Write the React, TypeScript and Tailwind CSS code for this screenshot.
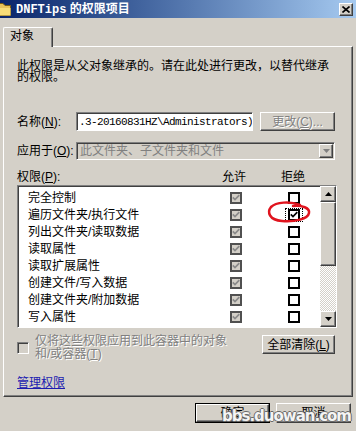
import React from 'react'

const raised =
  'border border-t-white border-l-white border-r-[#404040] border-b-[#404040] shadow-[inset_-1px_-1px_#808080]'
const sunken =
  'border border-t-[#808080] border-l-[#808080] border-r-white border-b-white shadow-[inset_1px_1px_#404040]'
const grayText = 'text-[#808080] [text-shadow:1px_1px_#ffffff]'

const rows = [
  '完全控制',
  '遍历文件夹/执行文件',
  '列出文件夹/读取数据',
  '读取属性',
  '读取扩展属性',
  '创建文件/写入数据',
  '创建文件夹/附加数据',
  '写入属性',
  '写入扩展属性',
]

function Box({ checked = false, disabled = false }: { checked?: boolean; disabled?: boolean }) {
  return (
    <span
      className={`w-[12px] h-[12px] shrink-0 flex items-center justify-center border-2 ${
        disabled ? 'border-[#505050] bg-[#d4d0c8]' : 'border-black bg-white'
      }`}
    >
      {checked && (
        <svg width="8" height="7" viewBox="0 0 8 7">
          <path d="M0.8 3.4 L3 5.6 L7.3 1.2" stroke={disabled ? '#8a8a8a' : '#000000'} strokeWidth="1.7" fill="none" />
        </svg>
      )}
    </span>
  )
}

function Arrow({ up = false, color = '#000000' }: { up?: boolean; color?: string }) {
  return (
    <svg width="7" height="4" viewBox="0 0 7 4">
      <path d={up ? 'M0 4 L3.5 0 L7 4 Z' : 'M0 0 L7 0 L3.5 4 Z'} fill={color} />
    </svg>
  )
}

function Scrollbar() {
  return (
    <div className="w-[16px] h-full flex flex-col bg-[#d4d0c8]">
      <div className={`h-[16px] ${raised} flex items-center justify-center`}>
        <Arrow up />
      </div>
      <div className={`h-[64px] ${raised}`} />
      <div className="flex-1 bg-[repeating-conic-gradient(#d4d0c8_0_25%,#ffffff_0_50%)] [background-size:2px_2px]" />
      <div className={`h-[16px] ${raised} flex items-center justify-center`}>
        <Arrow />
      </div>
    </div>
  )
}

export default function App() {
  return (
    <div className="relative w-[356px] h-[431px] overflow-hidden bg-[#d4d0c8] text-[12px] leading-[14px] text-black font-['Liberation_Sans','Noto_Sans_CJK_SC',sans-serif] flex flex-col">
      {/* title bar */}
      <div className="h-[18px] shrink-0 flex items-center bg-linear-to-r from-[#0a246a] to-[#a6caf0] pr-[3px]">
        <svg width="11" height="14" viewBox="0 0 11 14" className="shrink-0">
          <path d="M-4 1.5 H3 L5 3.5 H10.5 V13.5 H-4 Z" fill="#e8c25a" stroke="#7a5c12" strokeWidth="1" />
          <path d="M-4 6 H10.5 V13.5 H-4 Z" fill="#f7dc78" />
        </svg>
        <span className="ml-[5px] text-white font-bold whitespace-nowrap">
          <span className="font-['Liberation_Mono',monospace]">DNFTips</span> 的权限项目
        </span>
        <div className={`ml-auto w-[14px] h-[13px] bg-[#d4d0c8] ${raised} flex items-center justify-center`}>
          <svg width="8" height="7" viewBox="0 0 8 7">
            <path d="M0.5 0.5 L7.5 6.5 M7.5 0.5 L0.5 6.5" stroke="#000000" strokeWidth="1.6" />
          </svg>
        </div>
      </div>

      {/* tab + panel */}
      <div className="pt-[9px] pl-[3px]">
        <div className="relative z-10 -mb-px w-[50px] h-[20px] bg-[#d4d0c8] border-t border-l border-r border-b-0 border-t-white border-l-white border-r-[#404040] shadow-[inset_-1px_0_#808080] rounded-t-[2px] pl-[6px] pt-[1px]">
          对象
        </div>
        <div className={`w-[350px] h-[351px] ${raised} flex flex-col pl-[13px]`}>
          <p className="pt-[14px] w-[318px] leading-[11px]">
            此权限是从父对象继承的。请在此处进行更改，以替代继承的权限。
          </p>

          <div className="mt-[29px] flex items-center h-[19px]">
            <span className="w-[59px] whitespace-nowrap">
              名称(<u>N</u>):
            </span>
            <div
              className={`w-[177px] h-[19px] bg-white ${sunken} flex items-center pl-[2px] overflow-hidden whitespace-nowrap font-['Liberation_Mono',monospace] text-[11px] tracking-[-0.6px]`}
            >
              {'.3-20160831HZ\\Administrators)'}
            </div>
            <div className={`ml-[7px] w-[75px] h-[19px] ${raised} flex items-center justify-center ${grayText}`}>
              更改(<u>C</u>)...
            </div>
          </div>

          <div className="mt-[11px] flex items-center h-[18px]">
            <span className="w-[59px] whitespace-nowrap">
              应用于(<u>O</u>):
            </span>
            <div className={`w-[259px] h-[18px] ${sunken} flex items-center pl-[3px] text-[#808080]`}>
              <span className="flex-1 whitespace-nowrap">此文件夹、子文件夹和文件</span>
              <div className={`w-[14px] h-[14px] mr-[1px] ${raised} flex items-center justify-center`}>
                <Arrow color="#808080" />
              </div>
            </div>
          </div>

          <div className="mt-[10px] flex h-[14px] items-center">
            <span className="w-[199px]">
              权限(<u>P</u>):
            </span>
            <span className="w-[36px] text-center">允许</span>
            <span className="ml-[23px] w-[36px] text-center">拒绝</span>
          </div>

          <div className={`mt-[1px] w-[320px] h-[143px] bg-white ${sunken} flex overflow-hidden`}>
            <div className="flex-1 pt-[3px] overflow-hidden">
              {rows.map((r, i) => (
                <div key={r} className="h-[17px] flex items-center pl-[10px]">
                  <span className="w-[202px] whitespace-nowrap">{r}</span>
                  <Box checked disabled />
                  {i === 1 ? (
                    <span className="ml-[43px] px-[2px] border border-dotted border-black">
                      <Box checked />
                    </span>
                  ) : (
                    <span className="ml-[46px]">
                      <Box />
                    </span>
                  )}
                </div>
              ))}
            </div>
            <Scrollbar />
          </div>

          <div className="mt-[7px] flex w-[318px] justify-between items-start">
            <div className="flex">
              <span className={`mt-[7px] w-[12px] h-[12px] bg-[#d4d0c8] ${sunken}`} />
              <span className={`ml-[6px] w-[200px] leading-[13px] ${grayText}`}>
                仅将这些权限应用到此容器中的对象和/或容器(<u>T</u>)
              </span>
            </div>
            <div className={`w-[73px] h-[19px] ${raised} flex items-center justify-center whitespace-nowrap`}>
              全部清除(<u>L</u>)
            </div>
          </div>

          <span className="mt-[15px] self-start text-[#1c1cb0] underline">管理权限</span>
        </div>
      </div>

      {/* dialog buttons */}
      <div className="mt-[6px] flex justify-end gap-[6px] pr-[5px]">
        <div className="w-[75px] h-[20px] border border-black">
          <div className={`h-full ${raised} flex items-center justify-center`}>确定</div>
        </div>
        <div className={`w-[75px] h-[20px] ${raised} flex items-center justify-center`}>取消</div>
      </div>

      {/* red hand-drawn circle */}
      <svg width="48" height="28" viewBox="0 0 48 28" className="absolute left-[266px] top-[199px]">
        <path
          d="M34 6 C24 2, 10 3, 5 8 C1 13, 3 21, 16 22 C29 23, 42 20, 43 14 C44 9, 36 6, 27 7"
          stroke="#e0141e"
          strokeWidth="2.5"
          strokeLinecap="round"
          fill="none"
        />
      </svg>

      {/* watermark */}
      <span className="absolute right-[5px] top-[409px] leading-[15px] text-[15px] font-bold tracking-[-1px] text-[#f4f4f4] font-['DejaVu_Sans',sans-serif] [text-shadow:1px_0_#6a6a6a,-1px_0_#6a6a6a,0_1px_#6a6a6a,0_-1px_#6a6a6a]">
        bbs.duowan.com
      </span>
    </div>
  )
}
